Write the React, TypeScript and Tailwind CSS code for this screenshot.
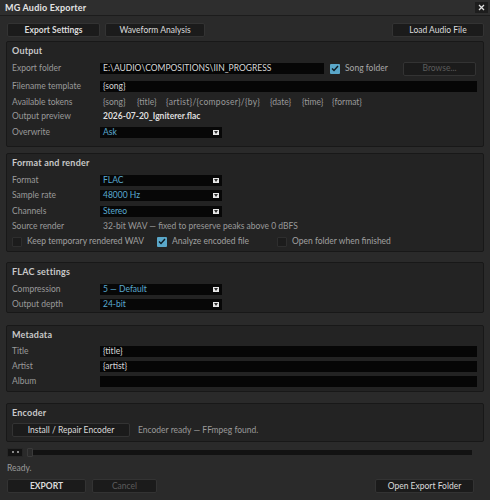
import React from "react";

const font = { fontFamily: 'Lato, "Open Sans", "Liberation Sans", sans-serif' };

function Section({ title, children, className = "" }: { title: string; children: React.ReactNode; className?: string }) {
  return (
    <div className={`mx-[6px] border border-[#181818] bg-[#232323] rounded-[2px] px-[5px] ${className}`}>
      <div className="h-[18px] flex items-center text-[9px] font-bold text-[#c8c8c8] tracking-[0.2px]">{title}</div>
      {children}
    </div>
  );
}

function Row({ label, h, children }: { label: string; h: string; children?: React.ReactNode }) {
  return (
    <div className={`flex items-center ${h}`}>
      <div className="w-[88px] shrink-0 text-[8.5px] text-[#9a9a9a] whitespace-nowrap">{label}</div>
      <div className="flex-1 flex items-center min-w-0">{children}</div>
    </div>
  );
}

function Input({ value, className = "" }: { value: string; className?: string }) {
  return (
    <div className={`h-[11px] bg-[#060606] flex items-center px-[3px] text-[8.5px] text-[#d8d8d8] whitespace-nowrap overflow-hidden ${className}`}>
      {value}
    </div>
  );
}

function Select({ value }: { value: string }) {
  return (
    <div className="h-[11px] w-[122px] bg-[#070707] flex items-center justify-between pl-[3px] pr-[3px] text-[8.5px] text-[#5aa9d0]">
      <span>{value}</span>
      <span className="w-[6px] h-[5px] bg-[#e8e8e8] flex items-center justify-center">
        <svg width="4" height="3" viewBox="0 0 4 3"><path d="M0 0 L4 0 L2 3 Z" fill="#333" /></svg>
      </span>
    </div>
  );
}

function Check({ checked }: { checked?: boolean }) {
  return checked ? (
    <span className="w-[10px] h-[10px] rounded-[1px] bg-[#5aa7c9] flex items-center justify-center shrink-0">
      <svg width="8" height="7" viewBox="0 0 8 7"><path d="M1 3.5 L3 5.5 L7 1" stroke="#0e1a22" strokeWidth="1.4" fill="none" /></svg>
    </span>
  ) : (
    <span className="w-[10px] h-[10px] rounded-[1px] bg-[#1c1c1c] border border-[#2e2e2e] shrink-0" />
  );
}

function Btn({ children, className = "", dim, bold }: { children: React.ReactNode; className?: string; dim?: boolean; bold?: boolean }) {
  return (
    <div
      className={`h-[14px] flex items-center justify-center bg-[#1b1b1b] border border-[#333333] rounded-[2px] text-[8.5px] whitespace-nowrap ${
        dim ? "text-[#5c5c5c]" : "text-[#dcdcdc]"
      } ${bold ? "font-bold" : ""} ${className}`}
    >
      {children}
    </div>
  );
}

export default function App() {
  return (
    <div className="w-[490px] h-[500px] bg-[#2a2a2a] overflow-hidden flex flex-col" style={font}>
      {/* title bar */}
      <div className="h-[16px] bg-[#2e2e2e] border-b border-[#1c1c1c] flex items-center justify-between pl-[5px] pr-[2px]">
        <span className="text-[9px] font-bold text-[#e4e4e4] tracking-[0.2px]">MG Audio Exporter</span>
        <span className="w-[13px] h-[11px] bg-[#1d1d1d] flex items-center justify-center">
          <svg width="7" height="7" viewBox="0 0 7 7"><path d="M1 1 L6 6 M6 1 L1 6" stroke="#e0e0e0" strokeWidth="1.3" /></svg>
        </span>
      </div>

      {/* tabs */}
      <div className="mt-[7px] flex items-center px-[7px]">
        <Btn className="w-[93px]" bold>Export Settings</Btn>
        <Btn className="w-[100px] ml-[5px]">Waveform Analysis</Btn>
        <div className="flex-1" />
        <Btn className="w-[92px] mr-[-1px]">Load Audio File</Btn>
      </div>

      {/* Output */}
      <Section title="Output" className="mt-[4px] pb-[6px]">
        <Row label="Export folder" h="h-[17px]">
          <Input value="E:\AUDIO\COMPOSITIONS\IIN_PROGRESS" className="w-[224px]" />
          <span className="ml-[6px]"><Check checked /></span>
          <span className="ml-[5px] text-[8.5px] text-[#a8a8a8]">Song folder</span>
          <Btn className="ml-auto mr-[2px] w-[73px]" dim>Browse...</Btn>
        </Row>
        <Row label="Filename template" h="h-[18px]">
          <Input value="{song}" className="flex-1 mr-[1px]" />
        </Row>
        <Row label="Available tokens" h="h-[14px]">
          <div className="flex pl-[3px] text-[8.5px] text-[#9a9a9a] whitespace-nowrap">
            <span className="w-[34px]">{"{song}"}</span>
            <span className="w-[29px]">{"{title}"}</span>
            <span className="w-[104px] tracking-[0.3px]">{"{artist}/{composer}/{by}"}</span>
            <span className="w-[32px]">{"{date}"}</span>
            <span className="w-[30px]">{"{time}"}</span>
            <span>{"{format}"}</span>
          </div>
        </Row>
        <Row label="Output preview" h="h-[15px]">
          <span className="pl-[3px] text-[8.5px] font-bold text-[#dedede]">2026-07-20_Igniterer.flac</span>
        </Row>
        <Row label="Overwrite" h="h-[16px]">
          <Select value="Ask" />
        </Row>
      </Section>

      {/* Format and render */}
      <Section title="Format and render" className="mt-[6px] pb-[2px]">
        <Row label="Format" h="h-[16px]"><Select value="FLAC" /></Row>
        <Row label="Sample rate" h="h-[15px]"><Select value="48000 Hz" /></Row>
        <Row label="Channels" h="h-[16px]"><Select value="Stereo" /></Row>
        <Row label="Source render" h="h-[15px]">
          <span className="pl-[3px] text-[8.5px] text-[#9a9a9a] whitespace-nowrap">32-bit WAV — fixed to preserve peaks above 0 dBFS</span>
        </Row>
        <div className="h-[15px] flex items-center text-[8.5px] text-[#a0a0a0] whitespace-nowrap">
          <Check />
          <span className="ml-[5px] w-[130px]">Keep temporary rendered WAV</span>
          <Check checked />
          <span className="ml-[5px] w-[105px]">Analyze encoded file</span>
          <Check />
          <span className="ml-[5px]">Open folder when finished</span>
        </div>
      </Section>

      {/* FLAC */}
      <Section title="FLAC settings" className="mt-[10px]">
        <Row label="Compression" h="h-[16px]"><Select value="5 — Default" /></Row>
        <Row label="Output depth" h="h-[15px]"><Select value="24-bit" /></Row>
      </Section>

      {/* Metadata */}
      <Section title="Metadata" className="mt-[12px] pb-[2px]">
        <Row label="Title" h="h-[15px]"><Input value="{title}" className="flex-1 mr-[1px]" /></Row>
        <Row label="Artist" h="h-[15px]"><Input value="{artist}" className="flex-1 mr-[1px]" /></Row>
        <Row label="Album" h="h-[15px]"><Input value="" className="flex-1 mr-[1px]" /></Row>
      </Section>

      {/* Encoder */}
      <Section title="Encoder" className="mt-[11px] pb-[3px]">
        <div className="h-[16px] flex items-center">
          <Btn className="w-[118px]">Install / Repair Encoder</Btn>
          <span className="ml-[8px] text-[8.5px] text-[#9a9a9a]">Encoder ready — FFmpeg found.</span>
        </div>
      </Section>

      {/* progress */}
      <div className="mt-[5px] h-[10px] flex items-center px-[7px]">
        <div className="w-[16px] h-[9px] bg-[#131313] border border-[#262626] flex items-center justify-center gap-[3px]">
          <span className="w-[2px] h-[2px] bg-[#8a8a8a]" />
          <span className="w-[2px] h-[2px] bg-[#8a8a8a]" />
        </div>
        <div className="ml-[4px] w-[445px] h-[5px] bg-[#121212] relative">
          <span className="absolute left-0 top-[-2px] w-[6px] h-[9px] bg-[#2a2a2a] border border-[#3a3a3a] rounded-[1px]" />
        </div>
      </div>

      <div className="mt-[5px] h-[12px] flex items-center px-[7px] text-[8.5px] text-[#9a9a9a]">Ready.</div>

      <div className="mt-[5px] flex items-center px-[7px]">
        <Btn className="w-[79px]" bold>EXPORT</Btn>
        <Btn className="w-[65px] ml-[6px]" dim>Cancel</Btn>
        <div className="flex-1" />
        <Btn className="w-[99px] mr-[9px]">Open Export Folder</Btn>
      </div>
    </div>
  );
}
